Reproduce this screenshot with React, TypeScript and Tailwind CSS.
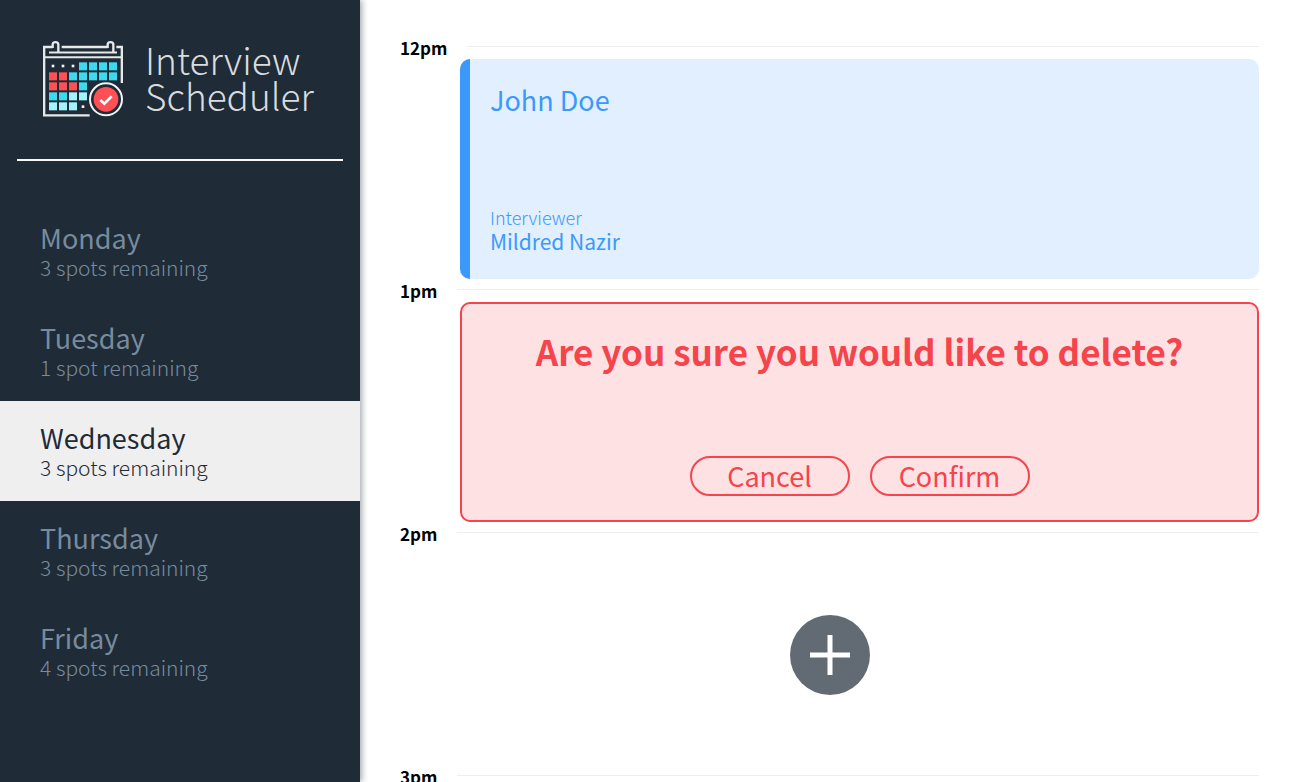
import React from "react";

type Day = { name: string; spots: number };

const days: Day[] = [
  { name: "Monday", spots: 3 },
  { name: "Tuesday", spots: 1 },
  { name: "Wednesday", spots: 3 },
  { name: "Thursday", spots: 3 },
  { name: "Friday", spots: 4 },
];

const calendarCells: [number, number, string][] = [
  [147, 97, "#3cd9ef"], [177, 97, "#3cd9ef"], [207, 97, "#3cd9ef"], [237, 97, "#3cd9ef"],
  [57, 127, "#ff5055"], [87, 127, "#ff5055"], [117, 127, "#3cd9ef"], [147, 127, "#3cd9ef"],
  [177, 127, "#3cd9ef"], [207, 127, "#3cd9ef"], [237, 127, "#3cd9ef"],
  [57, 157, "#ff5055"], [87, 157, "#ff5055"], [117, 157, "#ff5055"], [147, 157, "#3cd9ef"],
  [57, 187, "#3cd9ef"], [87, 187, "#3cd9ef"], [117, 187, "#a0f3ff"], [147, 187, "#a0f3ff"],
  [57, 217, "#a0f3ff"], [87, 217, "#a0f3ff"], [117, 217, "#a0f3ff"],
];

const calendarDots: [number, number][] = [[69, 108], [99, 108], [129, 108], [159, 230]];

function CalendarLogo() {
  return (
    <svg viewBox="36 30 246 234" className="h-[78px] w-[82px] shrink-0" aria-hidden="true">
      <g fill="none" stroke="#e6e9ea" strokeWidth="7">
        <path d="M68 51H42.500V256H179" />
        <path d="M95 51H233M259 51H275.500V159" />
        <path d="M42 82H275" strokeWidth="6" />
        <path d="M57 67.500H261" strokeWidth="6" />
        <path d="M68 54V44C68 34 85 34 85 44V67" strokeWidth="7" />
        <path d="M233 54V44C233 34 250 34 250 44V67" strokeWidth="7" />
      </g>
      {calendarCells.map(([x, y, fill]) => (
        <rect key={`${x}-${y}`} x={x} y={y} width="24" height="24" fill={fill} />
      ))}
      {calendarDots.map(([x, y]) => (
        <rect key={`${x}-${y}`} x={x - 4} y={y - 4} width="8" height="8" fill="#f1f3f4" />
      ))}
      <circle cx="228" cy="208" r="48" fill="#1f2b36" stroke="#f1f3f4" strokeWidth="6" />
      <circle cx="228" cy="208" r="37" fill="#ff5055" />
      <path d="M211 210L223 221L245 199" fill="none" stroke="#fff" strokeWidth="8" />
    </svg>
  );
}

function Sidebar() {
  const selected = "Wednesday";
  return (
    <aside className="z-10 w-[360px] shrink-0 bg-[#1f2b36] shadow-[2px_0_6px_rgba(31,42,54,0.4)]">
      <div className="flex h-[159px] items-start gap-[21px] px-[42px] pt-10">
        <CalendarLogo />
        <h1 className="pt-px text-[37px] font-light leading-9 text-[#d9dcde]">
          Interview
          <br />
          Scheduler
        </h1>
      </div>
      <hr className="mx-[17px] border-0 border-t-2 border-[#f8f8f8]" />
      <nav className="mt-10">
        <ul>
          {days.map((day) => (
            <li key={day.name}>
              <button
                type="button"
                className={
                  day.name === selected
                    ? "flex h-[100px] w-full flex-col justify-center bg-[#efefef] px-10 pb-0.5 text-left text-[#1f2b36]"
                    : "flex h-[100px] w-full flex-col justify-center px-10 pb-0.5 text-left text-[#788b9e]"
                }
              >
                <span className="text-[27px] font-normal leading-[34px]">{day.name}</span>
                <span className="text-[21px] font-light leading-6">
                  {day.spots} {day.spots === 1 ? "spot" : "spots"} remaining
                </span>
              </button>
            </li>
          ))}
        </ul>
      </nav>
    </aside>
  );
}

function TimeHeader({ time }: { time: string }) {
  return (
    <header className="flex h-[23px] items-start gap-5">
      <h2 className="text-[17px] font-bold leading-6 text-black">{time}</h2>
      <hr className="mt-2.5 grow border-0 border-t border-[#eeeeee]" />
    </header>
  );
}

export default function App() {
  return (
    <div className="flex h-screen overflow-hidden bg-white font-['Noto_Sans_CJK_SC','Source_Sans_Pro',sans-serif]">
      <Sidebar />
      <main className="min-w-0 grow overflow-hidden pl-10 pr-[34px] pt-9">
        <section>
          <TimeHeader time="12pm" />
          <article className="ml-[60px] flex h-[220px] flex-col justify-between rounded-[10px] border-l-[10px] border-[#3b99fc] bg-[#e2efff] px-5 pb-[26px] pt-[23px] text-[#3b99fc]">
            <h3 className="text-[27px] font-normal leading-9">John Doe</h3>
            <div>
              <h4 className="text-[18px] font-light leading-6">Interviewer</h4>
              <p className="text-[21px] font-normal leading-6">Mildred Nazir</p>
            </div>
          </article>
        </section>
        <section>
          <TimeHeader time="1pm" />
          <article className="ml-[60px] flex h-[220px] flex-col items-center justify-between rounded-[10px] border-2 border-[#f5444c] bg-[#fee2e3] px-6 pb-6 pt-[23px] text-[#f5444c]">
            <p className="text-[35px] font-bold leading-[48px]">Are you sure you would like to delete?</p>
            <div className="flex gap-5">
              {["Cancel", "Confirm"].map((label) => (
                <button
                  key={label}
                  type="button"
                  className="flex h-10 w-40 items-center justify-center rounded-[20px] border-2 border-[#f5444c] text-[27px] font-normal leading-9"
                >
                  {label}
                </button>
              ))}
            </div>
          </article>
        </section>
        <section>
          <TimeHeader time="2pm" />
          <article className="flex h-[220px] items-center justify-center">
            <button type="button" aria-label="Add" className="rounded-full">
              <svg viewBox="0 0 80 80" className="size-20" aria-hidden="true">
                <circle cx="40" cy="40" r="40" fill="#626b73" />
                <path d="M40 20V60M20 40H60" stroke="#fff" strokeWidth="5" />
              </svg>
            </button>
          </article>
        </section>
        <section>
          <TimeHeader time="3pm" />
        </section>
      </main>
    </div>
  );
}
